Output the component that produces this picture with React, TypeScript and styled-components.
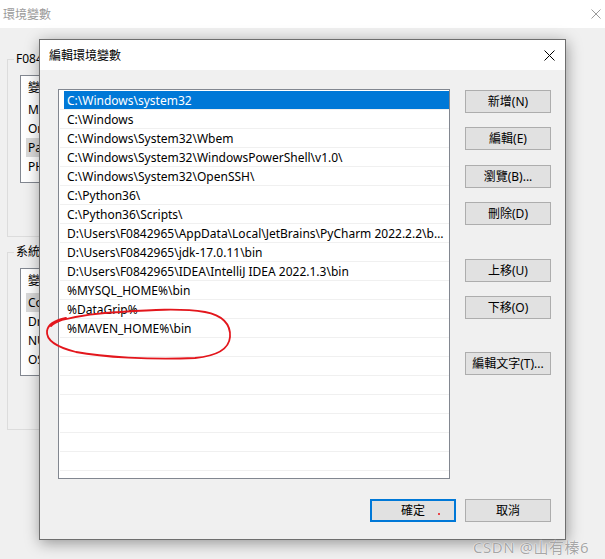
import React from "react";
import styled, { createGlobalStyle } from "styled-components";

const GlobalStyle = createGlobalStyle`
  html, body { margin: 0; padding: 0; background: #f0f0f0; }
  body {
    font-family: "Segoe UI", "Noto Sans", "Noto Sans CJK TC", sans-serif;
    font-size: 12px;
    color: #000;
  }
`;

const Desktop = styled.div`
  position: relative;
  width: 605px;
  height: 559px;
  overflow: hidden;
  background: #f0f0f0;
`;

/* ---------- background window ---------- */
const BackWindow = styled.div`
  display: flex;
  flex-direction: column;
  width: 605px;
  height: 100%;
`;

const BackTitleBar = styled.div`
  height: 28px;
  flex: none;
  background: #fff;
  display: flex;
  align-items: center;
  justify-content: space-between;
  padding: 0 4px 0 3px;
  color: #9a9a9a;
  font-size: 12px;
`;

const BackBody = styled.div`
  display: flex;
  flex-direction: column;
  padding: 0 50px 0 7px;
`;

const GroupBox = styled.fieldset<{ $mt: number }>`
  margin: ${(p) => p.$mt}px 0 0 0;
  padding: 9px 12px 53px;
  border: 1px solid #dcdcdc;
  min-width: 0;
`;

const GroupLegend = styled.legend`
  margin-left: -6px;
  padding: 0 2px;
  line-height: 14px;
  font-size: 12px;
`;

const BackList = styled.div`
  height: 108px;
  box-sizing: border-box;
  border: 1px solid #828790;
  background: #fff;
  overflow: hidden;
`;

const BackHeader = styled.div`
  height: 24px;
  line-height: 24px;
  padding-left: 7px;
`;

const BackRow = styled.div`
  height: 19px;
  padding-left: 5px;
  display: flex;
`;

const BackCell = styled.div<{ $sel?: boolean }>`
  flex: 1;
  line-height: 19px;
  padding-left: 2px;
  background: ${(p) => (p.$sel ? "#d9d9d9" : "transparent")};
  white-space: nowrap;
`;

/* ---------- dialog ---------- */
const Dialog = styled.div`
  position: absolute;
  left: 39px;
  top: 39px;
  width: 527px;
  height: 501px;
  box-sizing: border-box;
  border: 1px solid #6e6e6e;
  background: #f0f0f0;
  display: flex;
  flex-direction: column;
  box-shadow: 1px 3px 14px rgba(0, 0, 0, 0.38);
`;

const DialogTitleBar = styled.div`
  height: 30px;
  flex: none;
  background: #fff;
  display: flex;
  align-items: center;
  justify-content: space-between;
  padding: 0 10px 0 9px;
  font-size: 12px;
`;

const DialogBody = styled.div`
  flex: 1;
  display: flex;
  flex-direction: column;
  padding: 19px 14px 17px 18px;
`;

const MainRow = styled.div`
  display: flex;
  gap: 15px;
`;

const PathList = styled.div`
  width: 392px;
  height: 390px;
  box-sizing: border-box;
  border: 1px solid #828790;
  background: #fff;
  padding: 1px 0 0 1px;
  overflow: hidden;
`;

const PathRow = styled.div`
  height: 19px;
  box-sizing: border-box;
  border-bottom: 1px solid #f0f0f0;
  padding-left: 4px;
  display: flex;
`;

const PathCell = styled.div<{ $sel?: boolean }>`
  flex: 1;
  min-width: 0;
  height: 18px;
  line-height: 19px;
  padding-left: 3px;
  padding-right: 5px;
  background: ${(p) => (p.$sel ? "#0078d7" : "transparent")};
  color: ${(p) => (p.$sel ? "#fff" : "#000")};
  white-space: nowrap;
  overflow: hidden;
  text-overflow: ellipsis;
`;

const SideColumn = styled.div`
  width: 86px;
  display: flex;
  flex-direction: column;
`;

const WinButton = styled.button<{ $mt?: number; $default?: boolean }>`
  position: relative;
  width: 86px;
  height: 23px;
  margin-top: ${(p) => p.$mt ?? 0}px;
  padding: 0;
  box-sizing: border-box;
  border: ${(p) => (p.$default ? "2px solid #0078d7" : "1px solid #adadad")};
  background: #e1e1e1;
  font-family: inherit;
  font-size: 12px;
  color: #000;
  line-height: 1;
`;

const Footer = styled.div`
  display: flex;
  justify-content: flex-end;
  gap: 9px;
  margin-top: 20px;
`;

const RedDot = styled.span`
  position: absolute;
  left: 66px;
  top: 12px;
  width: 2px;
  height: 2px;
  background: #e8474a;
`;

const Annotation = styled.svg`
  position: absolute;
  left: 42px;
  top: 304px;
  width: 194px;
  height: 60px;
  pointer-events: none;
`;

const Watermark = styled.div`
  position: absolute;
  left: 473px;
  top: 538px;
  font-family: "Noto Sans", "Noto Sans CJK SC", sans-serif;
  font-size: 15px;
  line-height: 18px;
  letter-spacing: 0.5px;
  color: rgba(150, 150, 150, 0.85);
  text-shadow: 0 0 1px #fff, 0 0 1px #fff;
  white-space: nowrap;
`;

const CloseIcon = ({ color, size }: { color: string; size: number }) => (
  <svg width={size} height={size} viewBox={`0 0 ${size} ${size}`}>
    <path
      d={`M0.5 0.5 L${size - 0.5} ${size - 0.5} M${size - 0.5} 0.5 L0.5 ${size - 0.5}`}
      stroke={color}
      strokeWidth={1}
      fill="none"
    />
  </svg>
);

const paths = [
  "C:\\Windows\\system32",
  "C:\\Windows",
  "C:\\Windows\\System32\\Wbem",
  "C:\\Windows\\System32\\WindowsPowerShell\\v1.0\\",
  "C:\\Windows\\System32\\OpenSSH\\",
  "C:\\Python36\\",
  "C:\\Python36\\Scripts\\",
  "D:\\Users\\F0842965\\AppData\\Local\\JetBrains\\PyCharm 2022.2.2\\bin",
  "D:\\Users\\F0842965\\jdk-17.0.11\\bin",
  "D:\\Users\\F0842965\\IDEA\\IntelliJ IDEA 2022.1.3\\bin",
  "%MYSQL_HOME%\\bin",
  "%DataGrip%",
  "%MAVEN_HOME%\\bin",
];

const rows = [...paths, ...Array(20 - paths.length).fill("")];

const userVars = ["MAVEN_HOME", "OneDrive", "Path", "PHP_HOME"];
const sysVars = ["ComSpec", "DriverData", "NUMBER_OF_PROCESSORS", "OS"];

export default function App() {
  return (
    <Desktop>
      <GlobalStyle />
      <BackWindow>
        <BackTitleBar>
          <span>環境變數</span>
          <CloseIcon color="#9a9a9a" size={10} />
        </BackTitleBar>
        <BackBody>
          <GroupBox $mt={24}>
            <GroupLegend>F0842965 的使用者變數(U)</GroupLegend>
            <BackList>
              <BackHeader>變數</BackHeader>
              {userVars.map((v) => (
                <BackRow key={v}>
                  <BackCell $sel={v === "Path"}>{v}</BackCell>
                </BackRow>
              ))}
            </BackList>
          </GroupBox>
          <GroupBox $mt={8}>
            <GroupLegend>系統變數(S)</GroupLegend>
            <BackList>
              <BackHeader>變數</BackHeader>
              {sysVars.map((v) => (
                <BackRow key={v}>
                  <BackCell $sel={v === "ComSpec"}>{v}</BackCell>
                </BackRow>
              ))}
            </BackList>
          </GroupBox>
        </BackBody>
      </BackWindow>

      <Dialog>
        <DialogTitleBar>
          <span>編輯環境變數</span>
          <CloseIcon color="#000" size={11} />
        </DialogTitleBar>
        <DialogBody>
          <MainRow>
            <PathList>
              {rows.map((p, i) => (
                <PathRow key={i}>
                  <PathCell $sel={i === 0}>{p}</PathCell>
                </PathRow>
              ))}
            </PathList>
            <SideColumn>
              <WinButton $mt={1}>新增(N)</WinButton>
              <WinButton $mt={14}>編輯(E)</WinButton>
              <WinButton $mt={15}>瀏覽(B)...</WinButton>
              <WinButton $mt={14}>刪除(D)</WinButton>
              <WinButton $mt={34}>上移(U)</WinButton>
              <WinButton $mt={14}>下移(O)</WinButton>
              <WinButton $mt={33}>編輯文字(T)...</WinButton>
            </SideColumn>
          </MainRow>
          <Footer>
            <WinButton $default>
              確定
              <RedDot />
            </WinButton>
            <WinButton>取消</WinButton>
          </Footer>
        </DialogBody>
      </Dialog>

      <Annotation viewBox="42 304 194 60">
        <path
          d="M66 318 C56 320 48 324 47 331 C46 340 56 347 76 352 C102 357 150 360 195 358 C216 356 229 349 230 337 C231 324 222 315 205 312 C180 308 150 310 120 312 C95 313 78 316 62 320 C57 322 53 324 51 326"
          stroke="#e3161c"
          strokeWidth={1.8}
          fill="none"
          strokeLinecap="round"
        />
      </Annotation>

      <Watermark>CSDN @山有榛6</Watermark>
    </Desktop>
  );
}
